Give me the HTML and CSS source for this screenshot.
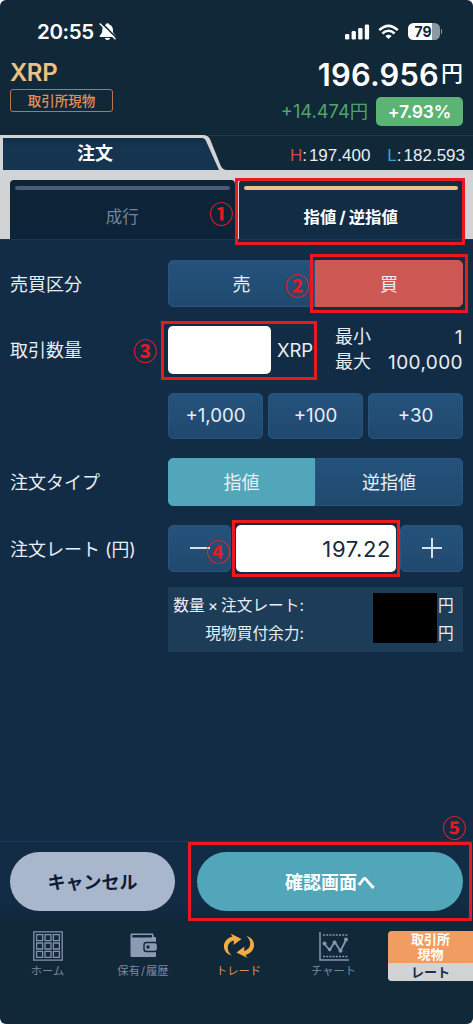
FILE: index.html
```html
<!DOCTYPE html>
<html lang="ja">
<head>
<meta charset="utf-8">
<title>注文</title>
<link rel="stylesheet" href="styles.css">
</head>
<body>
<div class="phone">
  <header class="status">
    <div class="clock"><span>20:55</span>
      <svg width="18" height="19" viewBox="0 0 18 19"><path fill="#fff" d="M8.500 1.200c-.9 0-1.500.6-1.600 1.300-2.500.7-3.600 2.700-3.600 5.100 0 3.600-1 4.600-2.200 5.700-.8.8-.5 1.700.5 1.700h14c1 0 1.300-.9.500-1.700-1.300-1.100-2.200-2.100-2.200-5.700 0-2.400-1.300-4.400-3.700-5.100-.1-.7-.8-1.300-1.700-1.300zM5.800 16h5.400c-.4 1.300-1.300 2-2.700 2s-2.300-.7-2.700-2z"/><path d="M2.300.6 18 16.300" stroke="#112839" stroke-width="1.500"/><path d="M.7 1.400 16.500 17.300" stroke="#fff" stroke-width="1.400"/></svg>
    </div>
    <div class="signals">
      <svg width="25" height="16" viewBox="0 0 25 16" fill="#fff"><rect x="0" y="10" width="4.300" height="5.500" rx="1.300"/><rect x="6.600" y="7" width="4.300" height="8.500" rx="1.300"/><rect x="13.200" y="4" width="4.300" height="11.500" rx="1.300"/><rect x="19.800" y="0.500" width="4.300" height="15" rx="1.300"/></svg>
      <svg width="21" height="16" viewBox="0 0 21 16" fill="none" stroke="#fff" stroke-width="2.600"><path d="M1.200 6.100Q10.500-2.500 19.800 6.100M4.400 9.500q6.100-5.500 12.200 0"/><path d="M10.500 15 7.400 12q3.100-2.600 6.200 0z" fill="#fff" stroke="none"/></svg>
      <div class="battery"><span>79</span><i></i></div>
    </div>
  </header>

  <section class="quote">
    <div class="pair"><h1>XRP</h1><span class="market">取引所現物</span></div>
    <div class="price">
      <div class="last"><b>196.956</b><span>円</span></div>
      <div class="change"><span class="diff">+14.474円</span><span class="rate">+7.93%</span></div>
    </div>
  </section>

  <section class="ordertop">
    <svg class="tabshape" viewBox="0 0 473 36" width="473" height="36"><path d="M0 0h203q5 0 7 4l10 25q2 6 7 6h246v1H0z" fill="#d2d3d4"/><path d="M3 3h199q3 0 4.500 4L219 35H3z" fill="url(#tabfill)"/><path d="M3 35.500H219" stroke="#fff" stroke-width="1.200"/><path d="M208 .5H473" stroke="#1c3c53"/><defs><linearGradient id="tabfill" x2="0" y2="1"><stop stop-color="#122e47"/><stop offset=".25" stop-color="#15344f"/><stop offset="1" stop-color="#15344f"/></linearGradient></defs></svg>
    <div class="ordertitle">注文</div>
    <div class="hilo"><span><em class="hi">H</em>:<b>197.400</b></span><span><em class="lo">L</em>:<b>182.593</b></span></div>
  </section>
  <nav class="modes">
    <div class="mode"><i></i><span>成行</span></div>
    <div class="mode active"><i></i><span>指値<u>/</u>逆指値</span></div>
  </nav>

  <main class="form">
    <div class="row side"><label>売買区分</label><div class="field segment"><button>売</button><button class="buy">買</button></div></div>
    <div class="row qty"><label>取引数量</label><div class="field amount"><div class="input"></div><span class="unit">XRP</span><div class="limits"><span>最小</span><span class="num">1</span><span>最大</span><span class="num">100,000</span></div></div></div>
    <div class="row steps"><label></label><div class="field trio"><button>+1,000</button><button>+100</button><button>+30</button></div></div>
    <div class="row type"><label>注文タイプ</label><div class="field segment"><button class="teal">指値</button><button>逆指値</button></div></div>
    <div class="row rateRow"><label>注文レート<small>(円)</small></label><div class="field stepper">
      <button><svg width="20" height="20"><path d="M0 10h20" stroke="#d7e1e9" stroke-width="2"/></svg></button>
      <div class="input">197.22</div>
      <button><svg width="20" height="20"><path d="M0 10h20M10 0v20" stroke="#d7e1e9" stroke-width="2"/></svg></button></div></div>
    <div class="row sumRow"><label></label><div class="field summary">
      <div class="names"><span>数量<s>×</s>注文レート:</span><span>現物買付余力:</span></div>
      <div class="mask"></div>
      <div class="yen"><span>円</span><span>円</span></div></div></div>
  </main>

  <div class="actions"><button class="cancel">キャンセル</button><button class="confirm">確認画面へ</button></div>

  <nav class="tabbar">
    <a><svg width="30" height="30" viewBox="0 0 30 30" fill="none" stroke="#8492ab" stroke-width="1.300"><path d="M.8.8h28.400v28.400H.8z"/><path d="M3.600 3.600h6v6h-6zM12 3.600h6v6h-6zM20.400 3.600h6v6h-6zM3.600 12h6v6h-6zM12 12h6v6h-6zM20.400 12h6v6h-6zM3.600 20.400h6v6h-6zM12 20.400h6v6h-6zM20.400 20.400h6v6h-6z"/></svg><span>ホーム</span></a>
    <a><svg width="30" height="30" viewBox="0 0 30 30"><path fill="#8c9ab3" fill-rule="evenodd" d="M4 2.500h20.500q1 0 1 1V6h1.500q1 0 1 1v18q0 1-1 1H4q-1.500 0-1.500-1.500v-21q0-1 1.500-1zM4.300 4v2.400H24V4z"/><rect x="16" y="11.500" width="13.500" height="9" rx="2.500" fill="#8c9ab3" stroke="#112839" stroke-width="1.400"/><circle cx="20" cy="16" r="1.700" fill="#112839"/></svg><span>保有<u>/</u>履歴</span></a>
    <a class="on"><svg width="32" height="30" viewBox="0 0 32 30" fill="#f3ab42"><path d="M8.500 24.500C-1.500 22-2 8.500 9.500 5.500L7.500 2.500 18.500 8 10.500 14l.5-4.500C4 11 2.500 19 8.500 24.500z"/><path d="M8.500 24.500C-1.500 22-2 8.500 9.500 5.500L7.500 2.500 18.500 8 10.500 14l.5-4.500C4 11 2.500 19 8.500 24.500z" transform="rotate(180 16 14.700)"/></svg><span>トレード</span></a>
    <a class="chart"><svg width="30" height="30" viewBox="0 0 30 30" fill="none" stroke="#8795ae"><path d="M1 1v28h29" stroke-width="1.500"/><path d="M4 4h25M4 25.500h25" stroke-width="1.500" stroke-dasharray="2 1.200"/><path d="m5.500 13 5.200 6 5-8 5.800 9 5.500-11" stroke-width="1.800"/><g fill="#8795ae" stroke="none"><circle cx="5.500" cy="12.500" r="2"/><circle cx="10.700" cy="18.500" r="1.800"/><circle cx="15.500" cy="11.500" r="2"/><circle cx="21.500" cy="19.700" r="2"/><circle cx="27" cy="8.500" r="2"/></g></svg><span>チャート</span></a>
    <div class="switch"><div>取引所<br>現物</div><div>レート</div></div>
  </nav>

  <div class="mark m1"></div><div class="mark m2"></div><div class="mark m3"></div><div class="mark m4"></div><div class="mark m5"></div>
  <span class="no n1">①</span><span class="no n2">②</span><span class="no n3">③</span><span class="no n4">④</span><span class="no n5">⑤</span>
</div>
</body>
</html>
```

FILE: styles.css
```css
* { box-sizing: border-box; }
body { margin: 0; background: #fff; font-family: Inter, "Noto Sans CJK JP", sans-serif; color: #e9eef3; }
button { font: inherit; color: inherit; border: 0; margin: 0; padding: 0; display: flex; align-items: center; justify-content: center; }
svg { display: block; flex: none; }
u, s, em, i { text-decoration: none; font-style: normal; }
span { white-space: nowrap; }
.phone { position: relative; width: 473px; height: 1024px; overflow: hidden; border-radius: 6px; background: #112839; display: flex; flex-direction: column; }

.status { height: 56px; padding: 7px 33px 0 37px; display: flex; justify-content: space-between; align-items: center; color: #fff; flex: none; }
.clock { display: flex; align-items: center; gap: 5px; font-size: 20.500px; font-weight: 600; letter-spacing: -.35px; }
.signals { display: flex; align-items: center; gap: 8px; }
.battery { width: 32px; height: 17px; margin-left: 1px; border-radius: 5.500px; background: linear-gradient(90deg, #fff 24px, #8b99a5 24px); color: #112839; font-size: 14px; font-weight: 700; line-height: 17px; text-align: center; padding-right: 2px; position: relative; }
.battery i { position: absolute; left: 32.500px; top: 6px; width: 1.500px; height: 5px; background: #8b99a5; border-radius: 0 2px 2px 0; }

.quote { height: 78px; padding: 0 10px; display: flex; justify-content: space-between; flex: none; }
.pair h1 { margin: 0; padding-top: 2px; height: 33px; line-height: 29px; font-size: 24px; font-weight: 600; color: #ecc182; letter-spacing: -.4px; }
.market { display: flex; align-items: center; justify-content: center; width: 103px; height: 23px; padding-bottom: 2px; border: 1.500px solid #b8764d; border-radius: 3px; color: #e38e57; font-size: 13.500px; font-weight: 500; }
.price { display: flex; flex-direction: column; align-items: flex-end; }
.last { height: 41px; display: flex; line-height: 37px; color: #fff; gap: 2px; }
.last b { font-size: 30.800px; font-weight: 600; letter-spacing: .2px; }
.last span { font-size: 22px; font-weight: 500; line-height: 35px; }
.change { display: flex; align-items: center; gap: 8px; }
.diff { font-size: 18.300px; color: #4da668; line-height: 26px; padding-bottom: 2px; }
.rate { width: 87px; height: 29px; line-height: 29px; border-radius: 5px; background: #5bb374; color: #fff; font-weight: 600; font-size: 17.500px; letter-spacing: -.2px; text-align: center; }

.ordertop { height: 36px; display: grid; grid-template-columns: 219px 1fr; flex: none; align-items: center; }
.tabshape { grid-area: 1 / 1 / 2 / 3; }
.ordertitle { grid-area: 1 / 1; padding-left: 77px; font-size: 18px; font-weight: 700; color: #fff; line-height: 36px; padding-top: 2px; }
.hilo { grid-area: 1 / 2; justify-self: end; padding: 6px 8px 0 0; display: flex; gap: 17px; font: 17px/20px "Liberation Sans", sans-serif; }
.hilo b { font-weight: 400; margin-left: 2px; }
.hi { color: #c94f50; }
.lo { color: #3ba1d0; }

.modes { height: 69px; flex: none; background: #d2d3d4; padding: 10px 10px 0; display: grid; grid-template-columns: 1fr 1fr; gap: 4px; }
.mode { background: #0d2337; border-radius: 4px 4px 0 0; padding: 6px 5px; display: flex; flex-direction: column; align-items: center; color: #75849a; font-size: 16.500px; }
.mode i { width: 100%; height: 4px; border-radius: 2px; background: #4d5a70; }
.mode span { margin-top: 14px; line-height: 26px; }
.mode u { padding: 0 3px; }
.mode.active { background: #122c45; color: #fff; font-weight: 700; font-size: 16.400px; }
.mode.active i { background: #ecc086; }

.form { flex: 1; background: #122c45; border-top: 1px solid #153955; padding: 20px 10px 0; }
.row { display: grid; grid-template-columns: 158px 295px; align-items: center; }
.row label { font-size: 18px; padding-bottom: 2px; }
.row small { font-size: 17.800px; margin-left: 5px; }
.side, .type, .rateRow { height: 47px; }
.field { height: 100%; min-height: 46px; display: flex; font-size: 18px; }
.field button { background: linear-gradient(#24527c, #21496e); border: 1px solid #28557f; border-radius: 5px; padding-bottom: 1px; }
.segment button { flex: 1; padding-bottom: 2px; }
.segment button:first-child { flex: 0 0 147px; border-radius: 5px 0 0 5px; }
.segment button:last-child { border-radius: 0 5px 5px 0; }
.field .buy { background: #cc5854; border-color: #cc5854; }
.field .teal { background: #52a6ba; border-color: #52a6ba; }
.qty { height: 48px; margin-top: 19px; }
.input { background: #fff; border-radius: 5px; }
.amount { align-items: center; }
.amount .input { width: 103px; height: 48px; }
.unit { margin-left: 6px; font-size: 18.500px; letter-spacing: -.2px; }
.limits { margin-left: auto; width: 128px; display: grid; grid-template-columns: auto 1fr; line-height: 24px; font-size: 18px; }
.num { text-align: right; font-size: 19px; letter-spacing: .4px; padding-top: 1px; }
.steps { margin-top: 19px; height: 46px; }
.trio { gap: 5px; }
.trio button { flex: 1; font-size: 18.700px; }
.type { margin-top: 19px; height: 48px; }
.rateRow { margin-top: 19px; }
.stepper button { width: 63px; }
.stepper .input { flex: 1; margin: 0 4px 0 5px; color: #17293a; text-align: right; font-size: 22px; line-height: 48px; padding-right: 5px; letter-spacing: .6px; }
.sumRow { margin-top: 15px; height: 65px; }
.summary { background: #1d3c58; padding: 5px 10px 0 5px; font-size: 15.700px; line-height: 28px; }
.names { width: 131px; display: flex; flex-direction: column; align-items: flex-end; }
.names s { padding: 0 3px; }
.mask { margin: 1px 0 0 auto; width: 64px; height: 50px; background: #000; }
.yen { display: flex; flex-direction: column; margin-left: 1px; width: 15px; }

.actions { flex: none; height: 80px; background: linear-gradient(#122c45 60px, #10273b); border-top: 1px solid #1a3c59; padding: 10px 10px 0; display: flex; justify-content: space-between; }
.actions button { height: 59px; padding-bottom: 2px; border-radius: 30px; font-size: 18px; font-weight: 700; }
.cancel { width: 165px; background: #a9b7cc; color: #0c1c36; }
.confirm { width: 266px; background: #52a6ba; color: #fff; }

.tabbar { flex: none; height: 103px; padding-top: 10px; display: grid; grid-template-columns: 95px 96px 95px 95px 1fr; align-items: start; color: #7988a2; }
.tabbar a { display: flex; flex-direction: column; align-items: center; font-size: 11.300px; line-height: 18px; }
.tabbar a span { margin-top: 1px; }
.tabbar u { padding: 0 1px; }
.tabbar .on { color: #df8e52; }
.switch { margin-left: 7px; height: 50px; border-radius: 4px 0 0 4px; overflow: hidden; text-align: center; color: #fff; font-size: 13px; font-weight: 700; line-height: 14.500px; background: #f19c60; }
.switch div:first-child { height: 32px; padding-top: 1px; }
.switch div:last-child { height: 18px; line-height: 18px; background: #d2d3d4; color: #17324a; }

.mark { position: absolute; border: 3px solid #ec1821; }
.m1 { left: 235px; top: 178px; width: 230px; height: 67px; }
.m2 { left: 310px; top: 254px; width: 158px; height: 59px; }
.m3 { left: 161px; top: 321px; width: 156px; height: 59px; }
.m4 { left: 232px; top: 520px; width: 168px; height: 57px; }
.m5 { left: 188px; top: 842px; width: 284px; height: 79px; }
.no { position: absolute; width: 24px; text-align: center; color: #ec1821; font: 700 24px/24px "Noto Sans CJK JP", sans-serif; }
.n1 { left: 209px; top: 201px; }
.n2 { left: 285px; top: 273px; }
.n3 { left: 133px; top: 338px; }
.n4 { left: 206px; top: 539px; }
.n5 { left: 442px; top: 815px; }
```
